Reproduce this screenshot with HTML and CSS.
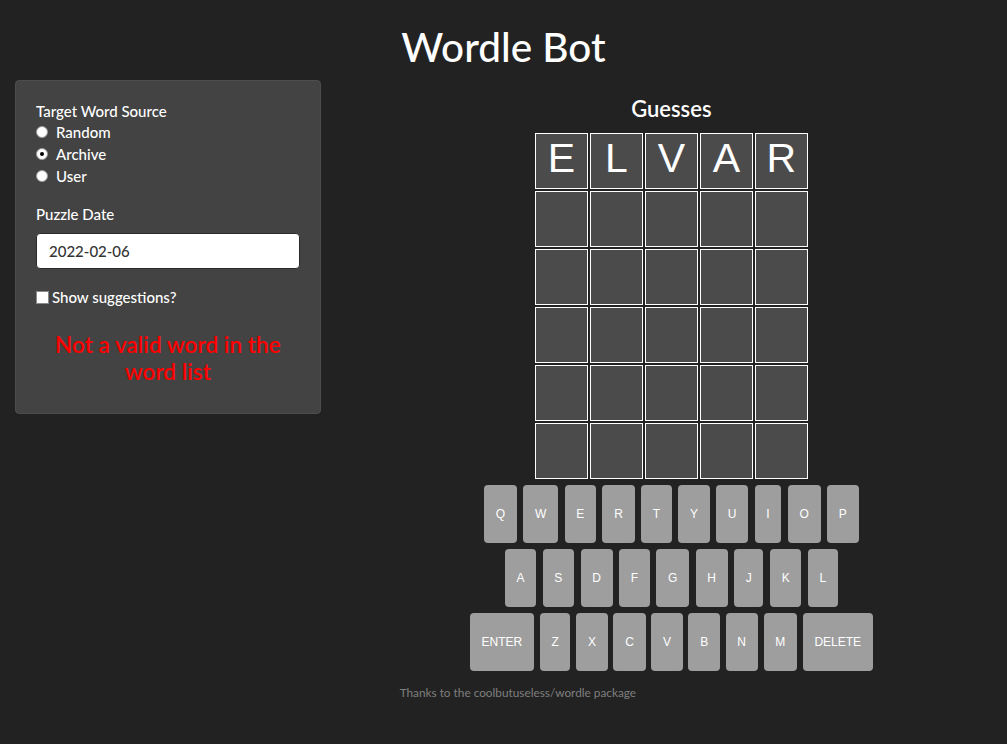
FILE: index.html
```html
<!DOCTYPE html>
<html>
<head>
<meta charset="utf-8">
<title>Wordle Bot</title>
<link rel="stylesheet" href="styles.css">
</head>
<body>
<div class="page">
  <h1 class="title">Wordle Bot</h1>
  <div class="row">
    <div class="sidebar">
      <div class="well">
        <div class="group">
          <div class="label">Target Word Source</div>
          <label class="radio"><input type="radio" name="src"> Random</label>
          <label class="radio"><input type="radio" name="src" checked> Archive</label>
          <label class="radio"><input type="radio" name="src"> User</label>
        </div>
        <div class="group">
          <div class="label label-input">Puzzle Date</div>
          <input class="date" type="text" value="2022-02-06">
        </div>
        <label class="check"><input type="checkbox"><span>Show suggestions?</span></label>
        <div class="error">Not a valid word in the word list</div>
      </div>
    </div>
    <div class="main">
      <h4 class="guesses">Guesses</h4>
      <div class="board">
        <div class="tile">E</div><div class="tile">L</div><div class="tile">V</div><div class="tile">A</div><div class="tile">R</div>
        <div class="tile"></div><div class="tile"></div><div class="tile"></div><div class="tile"></div><div class="tile"></div>
        <div class="tile"></div><div class="tile"></div><div class="tile"></div><div class="tile"></div><div class="tile"></div>
        <div class="tile"></div><div class="tile"></div><div class="tile"></div><div class="tile"></div><div class="tile"></div>
        <div class="tile"></div><div class="tile"></div><div class="tile"></div><div class="tile"></div><div class="tile"></div>
        <div class="tile"></div><div class="tile"></div><div class="tile"></div><div class="tile"></div><div class="tile"></div>
      </div>
      <div class="keyboard">
        <div class="krow">
          <button class="key">Q</button><button class="key">W</button><button class="key">E</button><button class="key">R</button><button class="key">T</button><button class="key">Y</button><button class="key">U</button><button class="key">I</button><button class="key">O</button><button class="key">P</button>
        </div>
        <div class="krow">
          <button class="key">A</button><button class="key">S</button><button class="key">D</button><button class="key">F</button><button class="key">G</button><button class="key">H</button><button class="key">J</button><button class="key">K</button><button class="key">L</button>
        </div>
        <div class="krow krow3">
          <button class="key">ENTER</button><button class="key">Z</button><button class="key">X</button><button class="key">C</button><button class="key">V</button><button class="key">B</button><button class="key">N</button><button class="key">M</button><button class="key">DELETE</button>
        </div>
      </div>
      <div class="footer">Thanks to the coolbutuseless/wordle package</div>
    </div>
  </div>
</div>
</body>
</html>
```

FILE: styles.css
```css
* { box-sizing: border-box; }
html, body {
  margin: 0;
  padding: 0;
  background: #222222;
  color: #ffffff;
  font-family: Lato, "Open Sans", sans-serif;
  font-size: 15px;
}
.page {
  padding: 0 15px;
}
.title {
  margin: 25px 0 11px;
  font-size: 40.5px;
  font-weight: 500;
  line-height: 44px;
  text-align: center;
}
.row {
  display: flex;
  margin: 0 -15px;
}
.sidebar {
  width: 33.3333%;
  padding: 0 15px;
  flex-shrink: 0;
}
.main {
  flex: 1;
  padding: 0 15px;
}
.well {
  background: #434343;
  border: 1px solid #4d4d4d;
  border-radius: 4px;
  padding: 20px 20px 21px;
}
.group {
  margin-bottom: 17px;
}
.label {
  line-height: 20px;
  font-weight: 500;
}
.label-input {
  margin-bottom: 9px;
}
.radio {
  display: flex;
  align-items: center;
  line-height: 22px;
  height: 22px;
  font-weight: 500;
}
.radio input {
  appearance: none;
  -webkit-appearance: none;
  margin: 0 8px 0 0;
  width: 12px;
  height: 12px;
  border-radius: 50%;
  border: 1px solid #9a9a9a;
  background: #ffffff;
  display: flex;
  align-items: center;
  justify-content: center;
}
.radio input:checked::after {
  content: "";
  width: 4px;
  height: 4px;
  border-radius: 50%;
  background: #000000;
}
.date {
  display: block;
  width: 100%;
  height: 36px;
  border: 1px solid #2a2a2a;
  border-radius: 4px;
  padding: 0 12px;
  font-family: Lato, sans-serif;
  font-size: 15px;
  font-weight: 500;
  color: #333333;
  background: #ffffff;
}
.check {
  display: flex;
  align-items: center;
  line-height: 20px;
  font-weight: 500;
  padding-top: 1px;
}
.check input {
  appearance: none;
  -webkit-appearance: none;
  margin: 0 3px 0 0;
  width: 13px;
  height: 13px;
  border: 1px solid #8a8a8a;
  background: #ffffff;
}
.error {
  margin-top: 24px;
  color: #ff0000;
  font-size: 22.6px;
  font-weight: 600;
  line-height: 27px;
  text-align: center;
  padding-bottom: 7px;
}
.guesses {
  margin: 16px 0 12px;
  font-size: 22px;
  font-weight: 600;
  line-height: 25px;
  text-align: center;
}
.board {
  display: grid;
  grid-template-columns: repeat(5, 53px);
  grid-auto-rows: 56px;
  gap: 2px;
  justify-content: center;
}
.tile {
  background: #4b4b4b;
  border: 1px solid #ffffff;
  display: flex;
  align-items: center;
  justify-content: center;
  font-family: "Liberation Sans", Arial, sans-serif;
  font-size: 41px;
  line-height: 1;
  padding-bottom: 5px;
  color: #ffffff;
}
.keyboard {
  margin-top: 6px;
  display: flex;
  flex-direction: column;
  gap: 6px;
  align-items: center;
}
.krow {
  display: flex;
  gap: 6.5px;
}
.krow3 {
  gap: 5.8px;
}
.key {
  height: 58px;
  padding: 0 11.7px;
  border: none;
  border-radius: 4px;
  background: #9e9e9e;
  color: #ffffff;
  font-family: "Liberation Sans", Arial, sans-serif;
  font-size: 12px;
}
.footer {
  margin: 14px 0 0 49px;
  font-size: 11.8px;
  color: #7f7f7f;
}
```
